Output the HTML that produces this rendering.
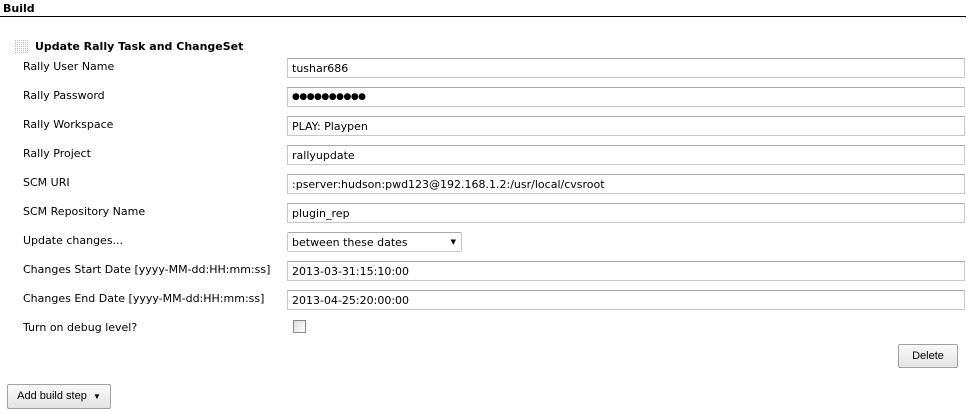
<!DOCTYPE html>
<html><head><style>
body{margin:0;width:974px;height:414px;background:#fff;font-family:"DejaVu Sans","Liberation Sans",sans-serif;font-size:11px;color:#000;position:relative;overflow:hidden}
.a{position:absolute}
.lbl{position:absolute;left:23px}
.in{position:absolute;left:287px;width:678px;height:20px;border:1px solid #c8c8c8;border-top-color:#a8a8a8;box-sizing:border-box;padding-left:4px;line-height:19px;font-size:11px}
.btn{position:absolute;border:1px solid #a0a0a0;border-radius:2px;background:linear-gradient(#fafafa,#e4e4e4);box-sizing:border-box;font-family:"Liberation Sans Narrow","Liberation Sans",sans-serif;font-size:11px;text-align:center}
</style></head><body>
<div class="a" style="left:3px;top:2px;font-weight:bold;font-size:11px">Build</div>
<div class="a" style="left:0;top:16px;width:966px;height:1px;background:#000"></div>
<svg class="a" style="left:15px;top:40px" width="13" height="13"><defs><pattern id="p" width="2" height="2" patternUnits="userSpaceOnUse"><rect width="1" height="1" fill="#bbb"/></pattern></defs><rect width="13" height="13" fill="url(#p)"/></svg>
<div class="a" style="left:35px;top:40px;font-weight:bold">Update Rally Task and ChangeSet</div>
<div class="lbl" style="top:60px">Rally User Name</div>
<div class="lbl" style="top:89px">Rally Password</div>
<div class="lbl" style="top:118px">Rally Workspace</div>
<div class="lbl" style="top:147px">Rally Project</div>
<div class="lbl" style="top:176px">SCM URI</div>
<div class="lbl" style="top:205px">SCM Repository Name</div>
<div class="lbl" style="top:234px">Update changes...</div>
<div class="lbl" style="top:263px">Changes Start Date [yyyy-MM-dd:HH:mm:ss]</div>
<div class="lbl" style="top:292px">Changes End Date [yyyy-MM-dd:HH:mm:ss]</div>
<div class="lbl" style="top:321px">Turn on debug level?</div>
<div class="in" style="top:58px">tushar686</div>
<div class="in" style="top:87px;font-size:9px;letter-spacing:-0.5px">●●●●●●●●●●</div>
<div class="in" style="top:116px">PLAY: Playpen</div>
<div class="in" style="top:145px">rallyupdate</div>
<div class="in" style="top:174px">:pserver:hudson:pwd123@192.168.1.2:/usr/local/cvsroot</div>
<div class="in" style="top:203px">plugin_rep</div>
<div class="in" style="top:232px;width:175px;border-radius:2px">between these dates<span class="a" style="right:5px;top:0;font-size:7px">▼</span></div>
<div class="in" style="top:261px">2013-03-31:15:10:00</div>
<div class="in" style="top:290px">2013-04-25:20:00:00</div>
<div class="a" style="left:293px;top:320px;width:13px;height:13px;border:1px solid #888;box-sizing:border-box;background:linear-gradient(135deg,#ddd,#fff)"></div>
<div class="btn" style="left:898px;top:344px;width:60px;height:24px;line-height:22px">Delete</div>
<div class="btn" style="left:7px;top:384px;width:104px;height:25px;line-height:23px">Add build step &nbsp;<span style="font-size:8px">▼</span></div>
</body></html>
